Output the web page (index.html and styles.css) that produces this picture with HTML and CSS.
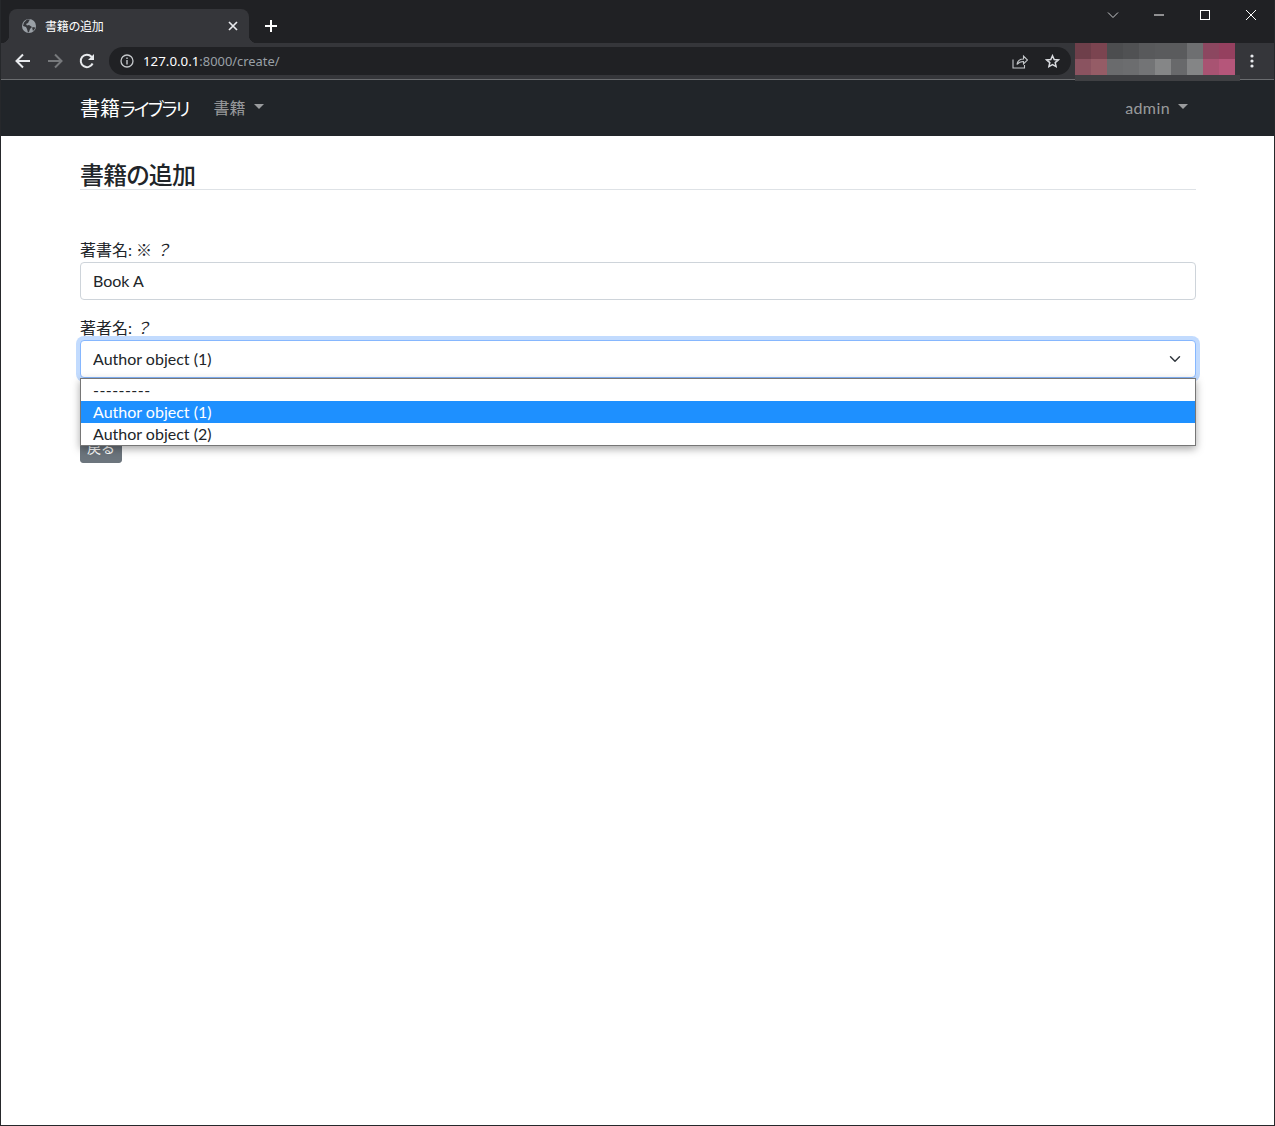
FILE: index.html
```html
<!DOCTYPE html>
<html lang="ja">
<head>
<meta charset="utf-8">
<title>書籍の追加</title>
<link rel="stylesheet" href="styles.css">
</head>
<body>
<div class="window">
  <header class="tabstrip">
    <div class="tab">
      <svg class="favicon" width="16" height="16" viewBox="0 0 16 16"><circle cx="8" cy="8" r="7" fill="#9aa0a6"/><path d="M6 1.500 3 4.500 2 8l3 1 1 2 1 3.500 1-.5 1-3 2-2-3-2-2 .5L5 6l2-1 1-2 1-1.500z" fill="#35363a"/><path d="M11 9.500l2.500-.5.500 1.500-2 2.500z" fill="#35363a"/></svg>
      <span class="tab-title">書籍の追加</span>
      <svg class="tab-close" width="10" height="10" viewBox="0 0 10 10"><path d="M1 1l8 8M9 1l-8 8" stroke="#e8eaed" stroke-width="1.700"/></svg>
    </div>
    <svg class="new-tab" width="12" height="12" viewBox="0 0 12 12"><path d="M6 0v12M0 6h12" stroke="#fff" stroke-width="2"/></svg>
    <div class="win-controls">
      <svg width="12" height="8" viewBox="0 0 12 8"><path d="M1 1.500l5 5 5-5" fill="none" stroke="#c8cacc" stroke-width="1"/></svg>
      <svg width="12" height="12" viewBox="0 0 12 12"><path d="M1 6h10" stroke="#fff" stroke-width="1"/></svg>
      <svg width="12" height="12" viewBox="0 0 12 12"><rect x="1.500" y="1.500" width="9" height="9" fill="none" stroke="#fff" stroke-width="1"/></svg>
      <svg width="12" height="12" viewBox="0 0 12 12"><path d="M1 1l10 10M11 1L1 11" stroke="#fff" stroke-width="1"/></svg>
    </div>
  </header>
  <div class="toolbar">
    <svg class="tool" width="16" height="16" viewBox="0 0 16 16"><path d="M15 8H2M8 1.500 1.500 8 8 14.500" fill="none" stroke="#e8eaed" stroke-width="2"/></svg>
    <svg class="tool" width="16" height="16" viewBox="0 0 16 16"><path d="M1 8h13M8 1.500 14.500 8 8 14.500" fill="none" stroke="#77797c" stroke-width="2"/></svg>
    <svg class="tool" width="16" height="16" viewBox="0 0 16 16"><path d="M13.600 10.500A6.200 6.200 0 1 1 12.500 3.700L14 5" fill="none" stroke="#e8eaed" stroke-width="2"/><path d="M15 1v6H9z" fill="#e8eaed"/></svg>
    <div class="omnibox">
      <svg class="info" width="14" height="14" viewBox="0 0 14 14"><circle cx="7" cy="7" r="6" fill="none" stroke="#c4c7ca" stroke-width="1.300"/><path d="M7 6v4.500M7 3.500v1.400" stroke="#c4c7ca" stroke-width="1.400"/></svg>
      <span class="url"><b class="url-host">127.0.0.1</b>:8000/create/</span>
      <svg class="share" width="16" height="15" viewBox="0 0 16 15"><path d="M1 5.500V14h11.500v-3M5 10.500c.5-3.500 3-5.500 6.500-5.500V2L15.500 6 11.500 10V7.500c-3 0-5 1-6.500 3z" fill="none" stroke="#c4c7ca" stroke-width="1.100"/></svg>
      <svg class="star" width="15" height="15" viewBox="0 0 15 15"><path d="M7.500 1.700 9.200 5.500l4.100.4-3.100 2.700.9 4-3.600-2.100-3.600 2.100.9-4L1.700 5.900l4.100-.4z" fill="none" stroke="#dadce0" stroke-width="1.500"/></svg>
    </div>
    <svg class="menu" width="4" height="14" viewBox="0 0 4 14"><circle cx="2" cy="2" r="1.600" fill="#e8eaed"/><circle cx="2" cy="7" r="1.600" fill="#e8eaed"/><circle cx="2" cy="12" r="1.600" fill="#e8eaed"/></svg>
    <div class="redaction">
      <svg width="160" height="32" viewBox="0 0 160 32" shape-rendering="crispEdges">
        <rect x="0" width="16" height="16" fill="#6e3f4a"/><rect x="16" width="16" height="16" fill="#7b4450"/><rect x="32" width="16" height="16" fill="#4c4d4f"/><rect x="48" width="16" height="16" fill="#505153"/><rect x="64" width="16" height="16" fill="#58595b"/><rect x="80" width="16" height="16" fill="#5a5b5d"/><rect x="96" width="16" height="16" fill="#5a5b5d"/><rect x="112" width="16" height="16" fill="#6e6f71"/><rect x="128" width="16" height="16" fill="#8c4760"/><rect x="144" width="16" height="16" fill="#95405f"/>
        <rect x="0" y="16" width="16" height="16" fill="#8a5360"/><rect x="16" y="16" width="16" height="16" fill="#955c66"/><rect x="32" y="16" width="16" height="16" fill="#6a6b6d"/><rect x="48" y="16" width="16" height="16" fill="#6c6d6f"/><rect x="64" y="16" width="16" height="16" fill="#737476"/><rect x="80" y="16" width="16" height="16" fill="#858687"/><rect x="96" y="16" width="16" height="16" fill="#68696b"/><rect x="112" y="16" width="16" height="16" fill="#848586"/><rect x="128" y="16" width="16" height="16" fill="#a85372"/><rect x="144" y="16" width="16" height="16" fill="#b5567a"/>
      </svg>
      <div class="redaction-strip"></div>
    </div>
  </div>
  <nav class="navbar">
    <a class="brand">書籍<span class="brand-kana">ライブラリ</span></a>
    <a class="nav-link">書籍<i class="caret"></i></a>
    <a class="nav-link nav-user">admin<i class="caret"></i></a>
  </nav>
  <main class="content">
    <h1 class="page-title">書籍の追加</h1>
    <form class="book-form">
      <div class="field">
        <label class="field-label" for="title">著書名: ※ <em class="hint">？</em></label>
        <input class="control" id="title" type="text" value="Book A">
      </div>
      <div class="field">
        <label class="field-label" for="author">著者名: <em class="hint">？</em></label>
        <div class="select-wrap">
          <select class="control control-select" id="author">
            <option>---------</option>
            <option selected>Author object (1)</option>
            <option>Author object (2)</option>
          </select>
          <ul class="popup">
            <li class="separator">---------</li>
            <li class="active">Author object (1)</li>
            <li>Author object (2)</li>
          </ul>
        </div>
      </div>
      <a class="btn-back">戻る</a>
    </form>
  </main>
</div>
</body>
</html>
```
FILE: styles.css
```css
* { box-sizing: border-box; }
html, body { margin: 0; height: 100%; }
body {
  font-family: "Lato", "Noto Sans CJK JP", sans-serif;
  font-feature-settings: "palt";
  font-size: 16px;
  color: #212529;
}
.window {
  height: 1126px;
  display: flex;
  flex-direction: column;
  border: 1px solid #26282b;
  border-top: 0;
  background: #fff;
  overflow: hidden;
}
.tabstrip {
  height: 43px;
  flex: none;
  background: #202124;
  display: flex;
  align-items: flex-end;
  padding-left: 8px;
}
.tab {
  position: relative;
  width: 240px;
  height: 34px;
  background: #35363a;
  border-radius: 8px 8px 0 0;
  display: flex;
  align-items: center;
  padding: 0 11px 0 12px;
  color: #fff;
}
.tab::before, .tab::after {
  content: "";
  position: absolute;
  bottom: 0;
  width: 8px;
  height: 8px;
}
.tab::before { left: -8px; background: radial-gradient(circle at 0 0, transparent 8px, #35363a 8.5px); }
.tab::after { right: -8px; background: radial-gradient(circle at 100% 0, transparent 8px, #35363a 8.5px); }
.favicon { flex: none; }
.tab-title { margin-left: 8px; padding-bottom: 2px; font-size: 12px; letter-spacing: -.2px; flex: 1; white-space: nowrap; }
.tab-close { flex: none; }
.new-tab { margin: 0 0 11px 16px; flex: none; }
.win-controls {
  margin-left: auto;
  align-self: flex-start;
  display: flex;
  align-items: center;
  height: 30px;
  gap: 34px;
  padding-right: 17px;
}
.toolbar {
  position: relative;
  height: 37px;
  flex: none;
  background: #35363a;
  border-bottom: 1px solid #6a6c6f;
  display: flex;
  align-items: center;
  padding: 0 14px;
  gap: 16px;
}
.tool { flex: none; }
.omnibox {
  width: 962px;
  height: 28px;
  margin-left: -2px;
  border-radius: 14px;
  background: #202124;
  display: flex;
  align-items: center;
  padding: 0 11px;
  flex: none;
}
.info { flex: none; }
.url { margin-left: 9px; font-family: "Noto Sans", sans-serif; font-size: 12.900px; color: #9aa0a6; flex: 1; white-space: nowrap; }
.url-host { color: #fff; font-weight: 400; font-size: 13.300px; }
.share { flex: none; }
.star { margin-left: 17px; flex: none; }
.menu { margin-left: 163px; flex: none; }
.redaction { position: absolute; left: 1074px; top: 0; width: 165px; }
.redaction svg { display: block; }
.redaction-strip { height: 6px; background: #3f4043; }
.navbar {
  height: 56px;
  flex: none;
  background: #212529;
  display: flex;
  align-items: center;
  padding: 0 79px 2px;
}
.brand { color: #fff; font-size: 20px; margin-right: 25px; }
.brand-kana { font-size: 18px; letter-spacing: -1.800px; }
.nav-link { color: rgba(255,255,255,.55); display: flex; align-items: center; }
.nav-user { margin-left: auto; margin-right: 7px; letter-spacing: .4px; }
.caret {
  display: inline-block;
  margin-left: 8px;
  margin-top: -1px;
  border-top: 5px solid currentColor;
  border-left: 5px solid transparent;
  border-right: 5px solid transparent;
}
.content { flex: 1; padding: 24px 78px 0 79px; background: #fff; }
.page-title {
  margin: 0 0 48px;
  height: 30px;
  font-size: 24px;
  line-height: 29px;
  font-weight: 500;
  letter-spacing: -.8px;
  border-bottom: 1px solid #dee2e6;
}
.book-form { display: flex; flex-direction: column; align-items: stretch; }
.field { margin-bottom: 16px; }
.field-label { display: block; line-height: 24px; height: 24px; }
.hint { font-style: italic; margin-left: 1px; }
.control {
  display: block;
  width: 100%;
  height: 38px;
  padding: 0 12px 2px;
  font: inherit;
  font-feature-settings: inherit;
  color: #212529;
  background: #fff;
  border: 1px solid #ced4da;
  border-radius: 4px;
  outline: 0;
}
.control-select {
  appearance: none;
  border-color: #86b7fe;
  box-shadow: 0 0 0 4px rgba(13,110,253,.25);
  background-image: url("data:image/svg+xml,%3csvg xmlns='http://www.w3.org/2000/svg' viewBox='0 0 16 16'%3e%3cpath fill='none' stroke='%23343a40' stroke-linecap='round' stroke-linejoin='round' stroke-width='2' d='M2 5l6 6 6-6'/%3e%3c/svg%3e");
  background-repeat: no-repeat;
  background-position: right 12px center;
  background-size: 16px 12px;
}
.select-wrap { position: relative; }
.popup {
  position: absolute;
  left: 0;
  right: 0;
  top: 38px;
  margin: 0;
  padding: 0;
  list-style: none;
  background: #fff;
  border: 1px solid #767676;
  box-shadow: 0 3px 8px rgba(0,0,0,.35);
  z-index: 2;
}
.popup li { height: 22px; line-height: 21px; padding-left: 12px; }
.popup .separator { letter-spacing: .45px; }
.popup .active { background: #1e90ff; color: #fff; }
.btn-back {
  align-self: flex-start;
  margin-top: 38px;
  height: 31px;
  line-height: 29px;
  padding: 0 6px;
  font-size: 14px;
  font-feature-settings: normal;
  color: #fff;
  background: #6c757d;
  border: 1px solid #6c757d;
  border-radius: 3px;
}
```
